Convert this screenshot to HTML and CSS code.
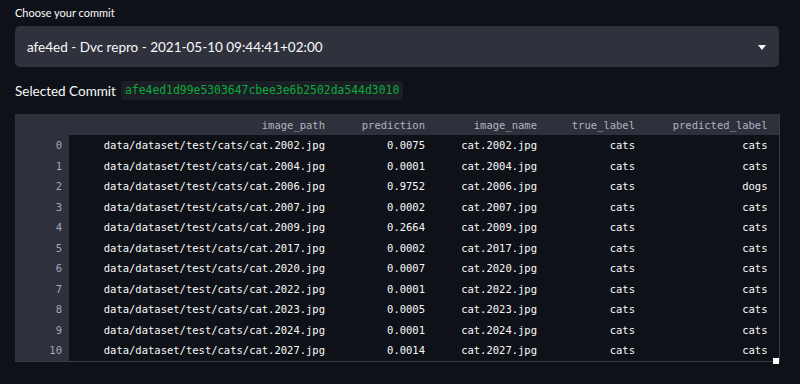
FILE: index.html
```html
<!DOCTYPE html>
<html>
  <head>
    <title>Commit explorer</title>
    <link rel="stylesheet" href="styles.css">
  </head>
  <body>
    <div class="main">
      <label class="field-label">Choose your commit</label>
      <div class="select">
        <span class="select-value">afe4ed - Dvc repro - 2021-05-10 09:44:41+02:00</span>
        <svg class="caret" width="8" height="5" viewBox="0 0 8 5">
          <path d="M0 0 H8 L4 5 Z" fill="#fafafa" />
        </svg>
      </div>
      <p class="selected">
        Selected Commit
        <code class="hash">afe4ed1d99e5303647cbee3e6b2502da544d3010</code>
      </p>
      <div class="frame">
        <table class="data">
          <colgroup>
            <col style="width: 54px" />
            <col style="width: 263px" />
            <col style="width: 100px" />
            <col style="width: 112px" />
            <col style="width: 98px" />
            <col style="width: 137px" />
          </colgroup>
          <thead>
            <tr>
              <th class="idx"></th>
              <th>image_path</th>
              <th>prediction</th>
              <th>image_name</th>
              <th>true_label</th>
              <th class="last">predicted_label</th>
            </tr>
          </thead>
          <tbody>
            <tr><td class="idx">0</td><td>data/dataset/test/cats/cat.2002.jpg</td><td>0.0075</td><td>cat.2002.jpg</td><td>cats</td><td class="last">cats</td></tr>
            <tr><td class="idx">1</td><td>data/dataset/test/cats/cat.2004.jpg</td><td>0.0001</td><td>cat.2004.jpg</td><td>cats</td><td class="last">cats</td></tr>
            <tr><td class="idx">2</td><td>data/dataset/test/cats/cat.2006.jpg</td><td>0.9752</td><td>cat.2006.jpg</td><td>cats</td><td class="last">dogs</td></tr>
            <tr><td class="idx">3</td><td>data/dataset/test/cats/cat.2007.jpg</td><td>0.0002</td><td>cat.2007.jpg</td><td>cats</td><td class="last">cats</td></tr>
            <tr><td class="idx">4</td><td>data/dataset/test/cats/cat.2009.jpg</td><td>0.2664</td><td>cat.2009.jpg</td><td>cats</td><td class="last">cats</td></tr>
            <tr><td class="idx">5</td><td>data/dataset/test/cats/cat.2017.jpg</td><td>0.0002</td><td>cat.2017.jpg</td><td>cats</td><td class="last">cats</td></tr>
            <tr><td class="idx">6</td><td>data/dataset/test/cats/cat.2020.jpg</td><td>0.0007</td><td>cat.2020.jpg</td><td>cats</td><td class="last">cats</td></tr>
            <tr><td class="idx">7</td><td>data/dataset/test/cats/cat.2022.jpg</td><td>0.0001</td><td>cat.2022.jpg</td><td>cats</td><td class="last">cats</td></tr>
            <tr><td class="idx">8</td><td>data/dataset/test/cats/cat.2023.jpg</td><td>0.0005</td><td>cat.2023.jpg</td><td>cats</td><td class="last">cats</td></tr>
            <tr><td class="idx">9</td><td>data/dataset/test/cats/cat.2024.jpg</td><td>0.0001</td><td>cat.2024.jpg</td><td>cats</td><td class="last">cats</td></tr>
            <tr><td class="idx">10</td><td>data/dataset/test/cats/cat.2027.jpg</td><td>0.0014</td><td>cat.2027.jpg</td><td>cats</td><td class="last">cats</td></tr>
          </tbody>
        </table>
        <span class="resize"></span>
      </div>
    </div>
  </body>
</html>
```

FILE: styles.css
```css
body {
  background-color: #0e1117;
  color: #fafafa;
  font-family: Lato, "Noto Sans", sans-serif;
  margin: 0;
  height: 384px;
  overflow: hidden;
}

.main {
  padding: 5px 21px 0 15px;
  display: flex;
  flex-direction: column;
}

.field-label {
  font-size: 11px;
  line-height: 16px;
  height: 21px;
}

.select {
  height: 41px;
  background-color: #2f313d;
  border-radius: 5px;
  display: flex;
  align-items: center;
  justify-content: space-between;
  padding: 0 13px 0 12px;
}

.select-value {
  font-size: 13.5px;
  padding-top: 1px;
}

.caret {
  margin-top: 1px;
}

.selected {
  margin: 14px 0 0 0;
  font-size: 13.5px;
  display: flex;
  align-items: center;
  gap: 5px;
  height: 19px;
}

.hash {
  font-family: "DejaVu Sans Mono", monospace;
  font-size: 11.4px;
  color: #09ab3b;
  background-color: #1c1e26;
  border-radius: 4px;
  padding: 0 4px;
  line-height: 19px;
}

.frame {
  margin-top: 14px;
  position: relative;
  width: 764px;
}

.data {
  border-collapse: collapse;
  table-layout: fixed;
  width: 764px;
  font-family: "DejaVu Sans Mono", monospace;
  font-size: 10.5px;
  border-right: 1px solid #3a3c47;
  border-bottom: 1px solid #3a3c47;
}

.data th,
.data td {
  text-align: right;
  padding: 0 7px 0 0;
  white-space: nowrap;
  overflow: hidden;
}

.data th {
  height: 21px;
  background-color: #2e303b;
  color: #b0b4c2;
  font-weight: normal;
}

.data td {
  height: 20.5px;
  color: #fafafa;
}

.data td.idx {
  background-color: #2e303b;
  color: #a3a8b8;
}

.data .last {
  padding-right: 11px;
}

.resize {
  position: absolute;
  right: 0;
  bottom: -2px;
  width: 6px;
  height: 6px;
  background-color: #ffffff;
}
```
